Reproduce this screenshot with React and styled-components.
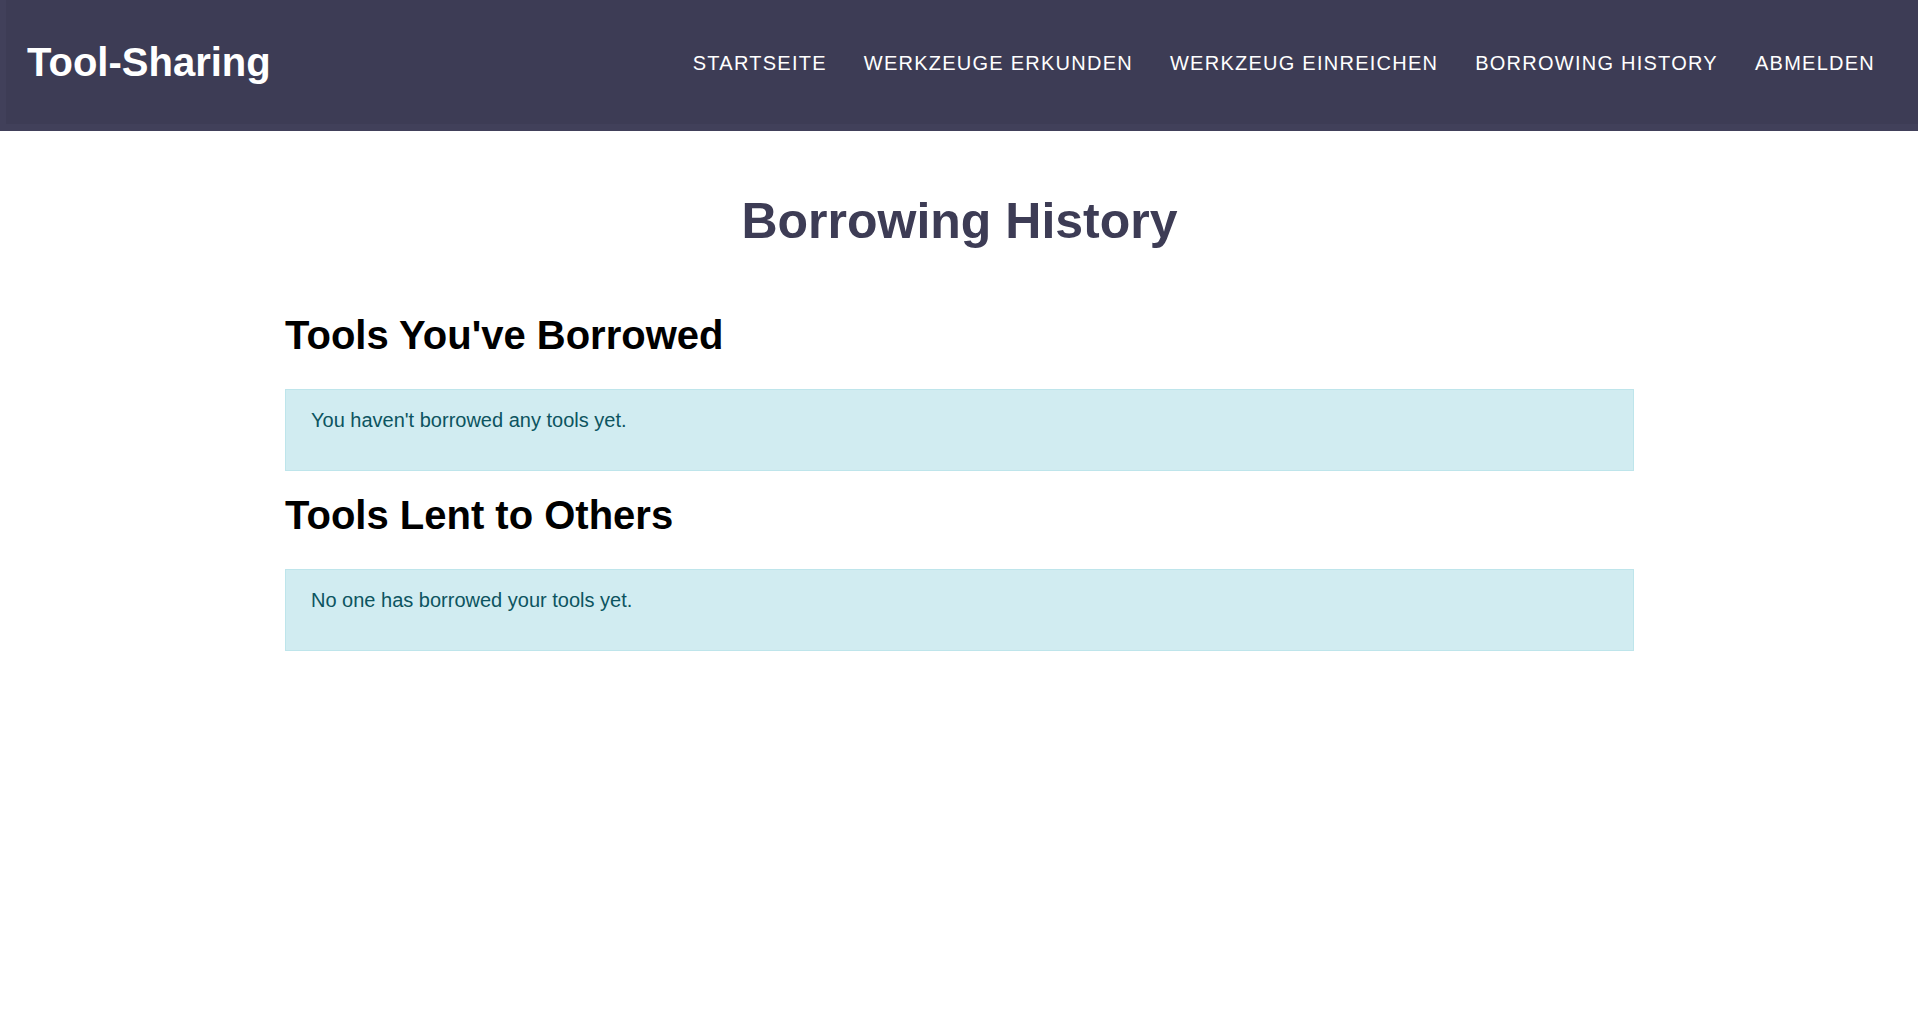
import React from 'react'
import styled, { createGlobalStyle } from 'styled-components'

const GlobalStyle = createGlobalStyle`
  * {
    box-sizing: border-box;
  }
  body {
    margin: 0;
    background: #ffffff;
    font-family: "Liberation Sans", Arial, sans-serif;
    color: #000000;
  }
`

const navLinks = [
  'Startseite',
  'Werkzeuge erkunden',
  'Werkzeug einreichen',
  'Borrowing History',
  'Abmelden',
]

const sections = [
  { title: "Tools You've Borrowed", empty: "You haven't borrowed any tools yet." },
  { title: 'Tools Lent to Others', empty: 'No one has borrowed your tools yet.' },
]

const App = () => {
  return (
    <>
      <GlobalStyle />
      <Header>
        <Logo href="#">Tool-Sharing</Logo>
        <Nav>
          {navLinks.map(link => (
            <NavLink key={link} href="#">
              {link}
            </NavLink>
          ))}
        </Nav>
      </Header>
      <Main>
        <PageTitle>Borrowing History</PageTitle>
        {sections.map(section => (
          <Section key={section.title}>
            <SectionTitle>{section.title}</SectionTitle>
            <Alert>
              <AlertText>{section.empty}</AlertText>
            </Alert>
          </Section>
        ))}
      </Main>
    </>
  )
}

export default App

// <------------ css ------------> //

const Header = styled.header`
  display: flex;
  align-items: center;
  justify-content: space-between;
  height: 131px;
  padding: 0 43px 7px 27px;
  background-color: #3d3c55;
  box-shadow: inset 6px -7px 0 #41405a;
`

const Logo = styled.a`
  color: #ffffff;
  font-size: 40px;
  font-weight: 700;
  text-decoration: none;
  line-height: 1.2;
`

const Nav = styled.nav`
  display: flex;
  align-items: center;
  gap: 37px;
  margin-top: 2px;
`

const NavLink = styled.a`
  color: #ffffff;
  font-size: 20px;
  letter-spacing: 1.25px;
  text-transform: uppercase;
  text-decoration: none;
  line-height: 1.5;
`

const Main = styled.main`
  width: 1350px;
  margin: 0 auto;
  padding: 60px 0 0 1px;
`

const PageTitle = styled.h1`
  margin: 0 0 60px;
  text-align: center;
  color: #3d3c55;
  font-size: 50px;
  font-weight: 700;
  line-height: 1.2;
`

const Section = styled.section`
  display: flex;
  flex-direction: column;
`

const SectionTitle = styled.h2`
  margin: 0 0 30px;
  font-size: 40px;
  font-weight: 700;
  line-height: 1.2;
  color: #000000;
`

const Alert = styled.div`
  margin-bottom: 20px;
  padding: 15px 25px;
  background-color: #d1ecf1;
  border: 1px solid #bee5eb;
  color: #0c5460;
`

const AlertText = styled.p`
  margin: 0 0 20px;
  font-size: 20px;
  line-height: 1.5;
`
